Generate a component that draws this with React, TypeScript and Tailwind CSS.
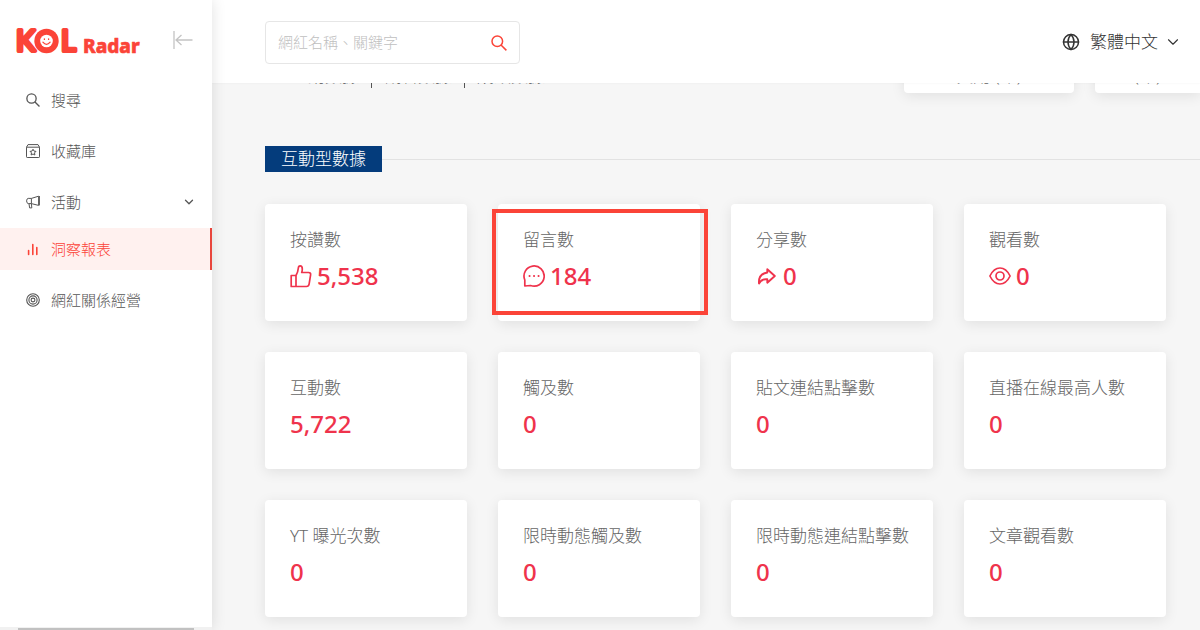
import React from 'react';
import { ChevronDown, Globe } from 'lucide-react';

function Logo() {
  return (
    <svg width="126" height="36" viewBox="0 0 126 36" role="img" aria-label="KOL Radar">
      <g fill="#fb4438" stroke="#fb4438" strokeLinejoin="round" strokeLinecap="round">
        <g fontFamily="Lato, 'Liberation Sans', sans-serif" fontSize="29" fontWeight="400" strokeWidth="4">
          <text x="0" y="29">K</text>
          <text x="45" y="29">L</text>
        </g>
        <text
          x="67"
          y="31"
          fontSize="19"
          fontWeight="800"
          strokeWidth="0.6"
          fontFamily="'Noto Sans', sans-serif"
        >
          Radar
        </text>
      </g>
      <circle cx="30.500" cy="19" r="12.200" fill="#fb4438" />
      <circle cx="30.500" cy="19" r="6.300" fill="#fff" />
      <path
        d="M26.900 20.200q3.600 4.400 7.200 0M28.400 16.800v.6M32.600 16.800v.6"
        fill="none"
        stroke="#fb4438"
        strokeWidth="1.3"
        strokeLinecap="round"
      />
    </svg>
  );
}

function SearchIcon({ size }: { size: number }) {
  return (
    <svg width={size} height={size} viewBox="0 0 16 16" fill="none" stroke="currentColor" strokeWidth="1.5">
      <circle cx="6.300" cy="6.300" r="5.300" />
      <path d="m10 10 5.400 5.400" />
    </svg>
  );
}

function CollectionIcon() {
  return (
    <svg width="14" height="14" viewBox="0 0 14 14" fill="none" stroke="currentColor" strokeWidth="1">
      <path d="M.5 3.2 2 .6h10l1.5 2.6v9.6q0 .7-.7.7H1.2q-.7 0-.7-.7zM.5 3.2h13" />
      <path d="m7 5.2 1 1.900 2 .3-1.500 1.500.4 2.100L7 10l-1.900 1 .4-2.100L4 7.400l2-.3z" />
    </svg>
  );
}

function MegaphoneIcon() {
  return (
    <svg width="14" height="14" viewBox="0 0 14 14" fill="none" stroke="currentColor" strokeWidth="1" strokeLinejoin="round">
      <path d="M12.600 1.200v9.200L5.400 8.600H2.200Q.6 8.200.6 5.900t1.600-2.500h3.200zM5.400 3.400v5.200M3 8.700l.6 4.200h2.200l-.4-4.200M13.400 1v9.400" />
    </svg>
  );
}

function BarsIcon() {
  return (
    <svg width="14" height="14" viewBox="0 0 14 14" fill="none" stroke="currentColor" strokeWidth="1.6" strokeLinecap="round">
      <path d="M2.600 8.500v4M6.800 2.500v10M10.800 5.500v7" />
    </svg>
  );
}

function TargetIcon() {
  return (
    <svg width="14" height="14" viewBox="0 0 14 14" fill="none" stroke="currentColor" strokeWidth="1.1">
      <circle cx="7" cy="7" r="6.300" />
      <circle cx="7" cy="7" r="4.100" />
      <circle cx="7" cy="7" r="1.900" />
    </svg>
  );
}

function CollapseIcon() {
  return (
    <svg width="20" height="18" viewBox="0 0 20 18" fill="none" stroke="#c4c4c4" strokeWidth="1.3">
      <path d="M1 0v18M19.500 9H3M8.500 4 3 9l5.500 5" />
    </svg>
  );
}

const metricIcon = {
  width: 22,
  height: 24,
  viewBox: '0 0 22 24',
  fill: 'none',
  stroke: 'currentColor',
  strokeWidth: 1.7,
  strokeLinejoin: 'round',
  strokeLinecap: 'round',
  'aria-hidden': true,
} as const;

function LikeIcon() {
  return (
    <svg {...metricIcon}>
      <path d="M1.200 11.500h4.800v11H1.200zM6 11.500Q8 8 8.300 4.200q.2-2.400 1.800-2.400 2.200 0 2.200 3.200 0 1.800-.6 3.500h6.800q2.500 0 2.100 2.400l-1.500 9.300q-.4 2.300-2.600 2.300H6" />
    </svg>
  );
}

function CommentIcon() {
  return (
    <svg {...metricIcon}>
      <path d="M1.800 22V16A10.100 10.100 0 1 1 7.500 21.500z" />
      <path d="M6.500 12h.1M11 12h.1M15.500 12h.1" strokeWidth="2" />
    </svg>
  );
}

function ShareIcon() {
  return (
    <svg {...metricIcon} strokeWidth={1.9}>
      <path d="M3 19.500Q2.300 9.800 11.300 8.500V5.300l7.500 6.700-7.500 6.700v-3.400q-6-.6-8.300 4.200z" />
    </svg>
  );
}

function ViewIcon() {
  return (
    <svg {...metricIcon}>
      <path d="M.9 12Q4.800 4 11 4t10.100 8Q17.200 20 11 20T.9 12z" />
      <circle cx="11" cy="12" r="4" />
    </svg>
  );
}

type MenuItem = { label: string; icon: React.ReactNode; active?: boolean; expandable?: boolean };

const menuGroups: MenuItem[][] = [
  [
    { label: '搜尋', icon: <SearchIcon size={14} /> },
    { label: '收藏庫', icon: <CollectionIcon /> },
    { label: '活動', icon: <MegaphoneIcon />, expandable: true },
  ],
  [
    { label: '洞察報表', icon: <BarsIcon />, active: true },
    { label: '網紅關係經營', icon: <TargetIcon /> },
  ],
];

type Metric = { label: string; value: string; icon?: React.ReactNode; highlighted?: boolean };

const metrics: Metric[] = [
  { label: '按讚數', value: '5,538', icon: <LikeIcon /> },
  { label: '留言數', value: '184', icon: <CommentIcon />, highlighted: true },
  { label: '分享數', value: '0', icon: <ShareIcon /> },
  { label: '觀看數', value: '0', icon: <ViewIcon /> },
  { label: '互動數', value: '5,722' },
  { label: '觸及數', value: '0' },
  { label: '貼文連結點擊數', value: '0' },
  { label: '直播在線最高人數', value: '0' },
  { label: 'YT 曝光次數', value: '0' },
  { label: '限時動態觸及數', value: '0' },
  { label: '限時動態連結點擊數', value: '0' },
  { label: '文章觀看數', value: '0' },
];

function MenuLink({ label, icon, active, expandable }: MenuItem) {
  return (
    <li>
      <a
        href="#"
        className={`flex h-[42px] items-center border-r-2 pr-3.5 pl-[26px] text-[15px] ${
          active ? 'border-[#e8453c] bg-[#fff1ef] text-[#fb4438]' : 'border-transparent text-[#555]'
        }`}
      >
        <span className="flex w-[25px] shrink-0">{icon}</span>
        <span className="flex-1">{label}</span>
        {expandable && <ChevronDown size={14} strokeWidth={2.2} />}
      </a>
    </li>
  );
}

function MetricCard({ label, value, icon, highlighted }: Metric) {
  return (
    <article className="relative rounded bg-white px-[25px] pt-6 pb-[29px] shadow-[0_3px_14px_rgba(0,0,0,0.09)]">
      <h3 className="text-[17px] leading-6 whitespace-nowrap text-[#666]">{label}</h3>
      <p className="mt-2 flex items-center gap-[5px] text-[24px] leading-8 font-medium text-[#ef334c]">
        {icon}
        {value}
      </p>
      {highlighted && (
        <span className="absolute top-[5px] -right-2 bottom-1.5 -left-1.5 border-4 border-[#fb4438]" />
      )}
    </article>
  );
}

export default function App() {
  return (
    <div className="flex h-screen overflow-hidden bg-[#f6f6f6] font-['Noto_Sans','Noto_Sans_CJK_TC',sans-serif] font-light">
      <aside className="relative z-20 flex w-[212px] shrink-0 flex-col bg-white shadow-[0_0_14px_rgba(0,0,0,0.12)]">
        <div className="flex h-[79px] items-center justify-between pr-[19px] pl-4">
          <Logo />
          <button type="button" aria-label="收合選單">
            <CollapseIcon />
          </button>
        </div>
        <nav className="flex flex-1 flex-col gap-[5px]">
          {menuGroups.map((group, i) => (
            <ul key={i} className="flex flex-col gap-[9px]">
              {group.map((item) => (
                <MenuLink key={item.label} {...item} />
              ))}
            </ul>
          ))}
        </nav>
        <div className="h-[3px] bg-[#f1f1f1] px-[18px] pt-px">
          <div className="h-0.5 bg-[#c1c1c1]" />
        </div>
      </aside>

      <div className="flex min-w-0 flex-1 flex-col">
        <header className="relative z-10 flex h-[83px] shrink-0 items-center justify-between bg-white pr-[18px] pl-[53px] shadow-[0_0_2px_rgba(0,0,0,0.06)]">
          <form className="mt-0.5 flex h-[43px] w-[255px] items-center rounded border border-[#e6e6e6] px-3">
            <input
              type="text"
              aria-label="網紅名稱、關鍵字"
              placeholder="網紅名稱、關鍵字"
              className="min-w-0 flex-1 text-[15px] outline-none placeholder:text-[#bfbfbf]"
            />
            <button type="button" aria-label="搜尋" className="text-[#fb4438]">
              <SearchIcon size={16} />
            </button>
          </form>
          <button type="button" className="flex items-center text-[17px] text-[#333]">
            <Globe size={18} strokeWidth={2} className="mr-2.5" />
            繁體中文
            <ChevronDown size={18} strokeWidth={1.5} className="ml-1.5" />
          </button>
        </header>

        <main className="min-h-0 flex-1 overflow-hidden pl-[53px]">
          <section className="-mt-20 flex h-[90px] items-end justify-between">
            <div className="flex items-end gap-3 pb-[5px] pl-[26px] text-[17px] leading-5 whitespace-nowrap text-[#555]">
              <span className="pb-0.5">互動數據</span>
              <span className="h-5 w-px bg-[#555]" />
              <span className="pb-0.5">觀看數據</span>
              <span className="h-5 w-px bg-[#555]" />
              <span className="pb-0.5">成效數據</span>
            </div>
            <div className="flex gap-[21px]">
              <div className="h-20 w-[170px] rounded bg-white pt-[51px] text-center text-[17px] leading-6 text-[#666] shadow-[0_3px_14px_rgba(0,0,0,0.09)]">
                費用 (年)
              </div>
              <div className="h-20 w-[105px] rounded-l bg-white pt-[51px] text-center text-[17px] leading-6 text-[#666] shadow-[0_3px_14px_rgba(0,0,0,0.09)]">
                (年)
              </div>
            </div>
          </section>

          <div className="mt-[53px] flex items-center">
            <h2 className="bg-[#043c7c] px-4 text-[17px] leading-[26px] text-white">互動型數據</h2>
            <span className="h-px flex-1 bg-[#e2e2e2]" />
          </div>

          <section className="mt-8 mr-[34px] grid grid-cols-4 gap-[31px]">
            {metrics.map((metric) => (
              <MetricCard key={metric.label} {...metric} />
            ))}
          </section>
        </main>
      </div>
    </div>
  );
}
